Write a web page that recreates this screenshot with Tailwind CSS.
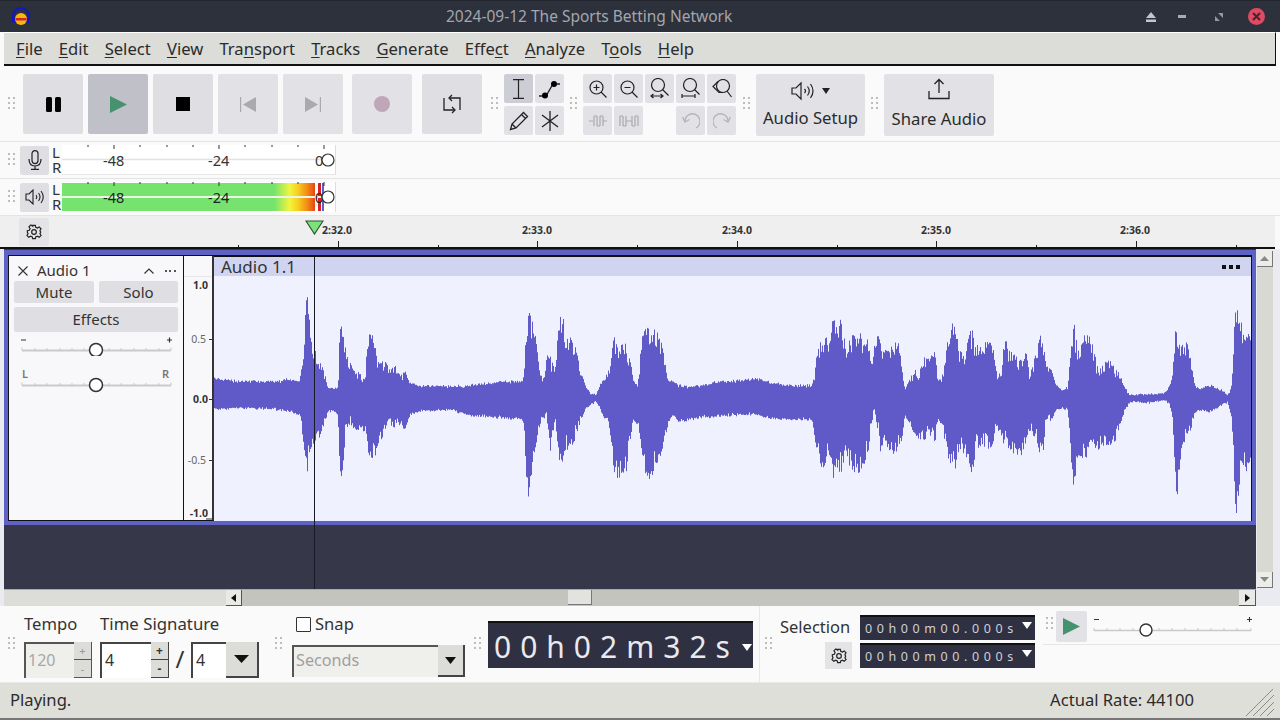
<!DOCTYPE html>
<html lang="en">
<head>
<meta charset="UTF-8">
<title>Audacity</title>
<script src="https://cdn.jsdelivr.net/npm/@tailwindcss/browser@4"></script>
</head>
<body class="w-[1280px] h-[720px] overflow-hidden flex flex-col bg-[#fafafa] font-['Noto_Sans',sans-serif] text-[#2b2b2b]">

<!-- Title bar -->
<div class="h-[32px] shrink-0 flex items-center bg-[#2d313c] border-t border-[#22252d]">
  <svg class="ml-[11px] w-[20px] h-[20px]" viewBox="0 0 20 20">
    <path d="M2 13 V9 a8 8 0 0 1 16 0 V13" fill="none" stroke="#1414c8" stroke-width="2"/>
    <ellipse cx="3" cy="13" rx="2" ry="3" fill="#1414c8"/><ellipse cx="17" cy="13" rx="2" ry="3" fill="#1414c8"/>
    <circle cx="10" cy="12" r="6" fill="#f4b90f"/><path d="M4.5 11 h11 v2.5 h-11z" fill="#d8232a"/>
  </svg>
  <div class="ml-[415px] text-[15.5px] text-[#a3a6ac]">2024-09-12 The Sports Betting Network</div>
  <div class="ml-auto flex items-center">
    <svg class="w-[12px] h-[10px]" viewBox="0 0 12 10"><path d="M6 0 L11 6 H1z M1 7.5 h10 V10 H1z" fill="#c3c6cb"/></svg>
    <svg class="ml-[21px] w-[8px] h-[3px]" viewBox="0 0 8 3"><path d="M0 0 h8 v3 H0z" fill="#a9acb2"/></svg>
    <svg class="ml-[29px] w-[8px] h-[8px]" viewBox="0 0 8 8"><path d="M3 0 h5 v5z M0 3 l5 5 H0z" fill="#94979d"/></svg>
    <div class="ml-[25px] mr-[15px] w-[17px] h-[17px] rounded-full bg-[#df4a64] flex items-center justify-center">
      <svg class="w-[9px] h-[9px]" viewBox="0 0 9 9"><path d="M1 1 L8 8 M8 1 L1 8" stroke="#3a2a30" stroke-width="2"/></svg>
    </div>
  </div>
</div>

<!-- Menu bar -->
<div class="h-[34px] w-[1272px] shrink-0 ml-[4px] flex items-center gap-[16.2px] pl-[12px] pt-[2px] bg-[#dcdcd8] border-t border-white border-b-2 border-b-[#111] border-r border-r-[#111] text-[16.6px] decoration-[#777] underline-offset-2">
  <span><u>F</u>ile</span><span><u>E</u>dit</span><span><u>S</u>elect</span><span><u>V</u>iew</span><span>Tra<u>n</u>sport</span><span><u>T</u>racks</span><span><u>G</u>enerate</span><span>Effe<u>c</u>t</span><span><u>A</u>nalyze</span><span>T<u>o</u>ols</span><span><u>H</u>elp</span>
</div>

<!-- Main toolbar -->
<div class="h-[76px] shrink-0 flex items-start pt-[8px] pl-[8px] bg-[#fafafa] border-b border-[#e4e4e4]">
  <svg class="mt-[23px] w-[8px] h-[14px] shrink-0" viewBox="0 0 8 14" fill="#bdbdbd"><path d="M0 0h2v2H0zM5 0h2v2H5zM0 5h2v2H0zM5 5h2v2H5zM0 10h2v2H0zM5 10h2v2H5z"/></svg>
  <div class="ml-[7px] flex gap-[5px]">
    <div class="w-[60px] h-[60px] rounded-[2px] bg-[#dfdfe3] flex items-center justify-center">
      <svg class="w-[15px] h-[15px]" viewBox="0 0 15 15"><rect width="6" height="15" rx="1.5"/><rect x="9" width="6" height="15" rx="1.5"/></svg>
    </div>
    <div class="w-[60px] h-[60px] rounded-[2px] bg-[#c0c0c9] flex items-center justify-center">
      <svg class="w-[17px] h-[17px]" viewBox="0 0 17 17"><path d="M0 0 L17 8.5 L0 17z" fill="#46926f"/></svg>
    </div>
    <div class="w-[60px] h-[60px] rounded-[2px] bg-[#dfdfe3] flex items-center justify-center">
      <div class="w-[14px] h-[14px] bg-black"></div>
    </div>
    <div class="w-[60px] h-[60px] rounded-[2px] bg-[#e2e2e6] flex items-center justify-center">
      <svg class="w-[16px] h-[15px]" viewBox="0 0 16 15"><path d="M0 0 h1.2 v15 H0z M16 0 v15 L3 7.5z" fill="#a9a9ae"/></svg>
    </div>
    <div class="w-[60px] h-[60px] rounded-[2px] bg-[#e2e2e6] flex items-center justify-center">
      <svg class="w-[16px] h-[15px]" viewBox="0 0 16 15"><path d="M14.8 0 H16 v15 h-1.2z M0 0 v15 L13 7.5z" fill="#a9a9ae"/></svg>
    </div>
    <div class="ml-[4px] w-[60px] h-[60px] rounded-[2px] bg-[#e2e2e6] flex items-center justify-center">
      <div class="w-[16px] h-[16px] rounded-full bg-[#bfa6b8]"></div>
    </div>
    <div class="ml-[5px] w-[60px] h-[60px] rounded-[2px] bg-[#dfdfe3] flex items-center justify-center">
      <svg class="w-[18px] h-[20px]" viewBox="0 0 18 20" fill="none" stroke="#222" stroke-width="1.3"><path d="M7 4 H17 V16 M11 16 H1 V4"/><path d="M9 1 L6 4 L9 7 M9 13 L12 16 L9 19"/></svg>
    </div>
  </div>
  <svg class="ml-[9px] mt-[23px] w-[8px] h-[14px] shrink-0" viewBox="0 0 8 14" fill="#bdbdbd"><path d="M0 0h2v2H0zM5 0h2v2H5zM0 5h2v2H0zM5 5h2v2H5zM0 10h2v2H0zM5 10h2v2H5z"/></svg>
  <div class="ml-[5px] grid grid-cols-[29px_29px] grid-rows-[29px_29px] gap-x-[2px] gap-y-[3px]">
    <div class="rounded-[2px] bg-[#cdcdd5] flex items-center justify-center">
      <svg class="w-[13px] h-[20px]" viewBox="0 0 13 20" fill="none" stroke="#222" stroke-width="1.2"><path d="M1 .6 H12 M1 19.4 H12 M6.5 .6 V19.4"/></svg>
    </div>
    <div class="rounded-[2px] bg-[#e2e2e6] flex items-center justify-center">
      <svg class="w-[24px] h-[20px]" viewBox="0 0 24 20"><path d="M1 17 H8 L15 5 H22" fill="none" stroke="#222" stroke-width="1.3"/><circle cx="7" cy="16.5" r="3"/><circle cx="16" cy="5" r="3"/></svg>
    </div>
    <div class="rounded-[2px] bg-[#e2e2e6] flex items-center justify-center">
      <svg class="w-[20px] h-[20px]" viewBox="0 0 20 20" fill="none" stroke="#222" stroke-width="1.3"><path d="M1.5 18.5 L3 13 L14.5 1.5 L18.5 5.5 L7 17z M3 13 L7 17 M12.5 3.5 L16.5 7.5"/></svg>
    </div>
    <div class="rounded-[2px] bg-[#e2e2e6] flex items-center justify-center">
      <svg class="w-[20px] h-[20px]" viewBox="0 0 20 20" fill="none" stroke="#222" stroke-width="1.3"><path d="M10 0 V20 M2 4 L18 16 M18 4 L2 16"/></svg>
    </div>
  </div>
  <svg class="ml-[6px] mt-[23px] w-[8px] h-[14px] shrink-0" viewBox="0 0 8 14" fill="#bdbdbd"><path d="M0 0h2v2H0zM5 0h2v2H5zM0 5h2v2H0zM5 5h2v2H5zM0 10h2v2H0zM5 10h2v2H5z"/></svg>
  <div class="ml-[5px] grid grid-cols-[29px_29px_29px_29px_29px] grid-rows-[29px_29px] gap-x-[2px] gap-y-[3px]">
    <div class="rounded-[2px] bg-[#e2e2e6] flex items-center justify-center">
      <svg class="w-[18px] h-[18px]" viewBox="0 0 18 18" fill="none" stroke="#222" stroke-width="1.2"><circle cx="7.5" cy="7.5" r="6.5"/><path d="M12 12 L17.5 17.5 M4.5 7.5 h6 M7.5 4.5 v6"/></svg>
    </div>
    <div class="rounded-[2px] bg-[#e2e2e6] flex items-center justify-center">
      <svg class="w-[18px] h-[18px]" viewBox="0 0 18 18" fill="none" stroke="#222" stroke-width="1.2"><circle cx="7.5" cy="7.5" r="6.5"/><path d="M12 12 L17.5 17.5 M4.5 7.5 h6"/></svg>
    </div>
    <div class="rounded-[2px] bg-[#e2e2e6] flex items-center justify-center">
      <svg class="w-[19px] h-[21px]" viewBox="0 0 19 21" fill="none" stroke="#222" stroke-width="1.2"><circle cx="8" cy="7" r="6.5"/><path d="M12.5 11.5 L18.5 17.5 M1 18 h12 M3.5 16 L1 18 L3.5 20 M10.5 16 L13 18 L10.5 20"/></svg>
    </div>
    <div class="rounded-[2px] bg-[#e2e2e6] flex items-center justify-center">
      <svg class="w-[19px] h-[21px]" viewBox="0 0 19 21" fill="none" stroke="#222" stroke-width="1.2"><circle cx="9" cy="7" r="6.5"/><path d="M13.5 11.5 L18.5 16.5 M1 18 h13 M1 16 v4 M14 16 v4"/></svg>
    </div>
    <div class="rounded-[2px] bg-[#e2e2e6] flex items-center justify-center">
      <svg class="w-[20px] h-[19px]" viewBox="0 0 20 19" fill="none" stroke="#222" stroke-width="1.2"><circle cx="11" cy="7" r="6.5"/><path d="M6 2.5 L1 7.5 L7 13.5 L11 13.5 M15 12 L19.5 18"/></svg>
    </div>
    <div class="rounded-[2px] bg-[#e2e2e6] flex items-center justify-center">
      <svg class="w-[18px] h-[12px]" viewBox="0 0 18 12" fill="none" stroke="#a9a9ae" stroke-width="1.2"><path d="M0 6 H4 M14 6 H18 M5 1 V11 M8 1 V11 M11 1 V11 M14 1 V11 M5 1 H8 M11 1 H14 M8 11 H11"/></svg>
    </div>
    <div class="rounded-[2px] bg-[#e2e2e6] flex items-center justify-center">
      <svg class="w-[20px] h-[12px]" viewBox="0 0 20 12" fill="none" stroke="#a9a9ae" stroke-width="1.2"><path d="M7 6 H13 M1 1 V11 M4 1 V11 M7 1 V11 M13 1 V11 M16 1 V11 M19 1 V11 M1 1 H4 M16 1 H19 M4 11 H7 M13 11 H16"/></svg>
    </div>
    <div></div>
    <div class="rounded-[2px] bg-[#e2e2e6] flex items-center justify-center">
      <svg class="w-[18px] h-[17px]" viewBox="0 0 18 17" fill="none" stroke="#b5b5ba" stroke-width="1.4"><path d="M14 16 A7.5 7.5 0 1 0 3 9 M0.5 5 L3 10 L7.5 7.5"/></svg>
    </div>
    <div class="rounded-[2px] bg-[#e2e2e6] flex items-center justify-center">
      <svg class="w-[18px] h-[17px]" viewBox="0 0 18 17" fill="none" stroke="#b5b5ba" stroke-width="1.4"><path d="M4 16 A7.5 7.5 0 1 1 15 9 M17.5 5 L15 10 L10.5 7.5"/></svg>
    </div>
  </div>
  <svg class="ml-[7px] mt-[23px] w-[8px] h-[14px] shrink-0" viewBox="0 0 8 14" fill="#bdbdbd"><path d="M0 0h2v2H0zM5 0h2v2H5zM0 5h2v2H0zM5 5h2v2H5zM0 10h2v2H0zM5 10h2v2H5z"/></svg>
  <div class="ml-[5px] w-[109px] h-[62px] rounded-[2px] bg-[#e2e2e6] flex flex-col items-center pt-[4px]">
    <div class="h-[26px] flex items-center">
      <svg class="w-[24px] h-[20px]" viewBox="0 0 24 20" fill="none" stroke="#222" stroke-width="1.2"><path d="M1 7 H5 L10 2 V18 L5 13 H1z M13.5 8 q2 2 0 4 M16.5 5.5 q3.5 4.5 0 9 M19.5 3 q5 7 0 14"/></svg>
      <svg class="ml-[7px] w-[8px] h-[6px]" viewBox="0 0 8 6"><path d="M0 0 H8 L4 6z" fill="#222"/></svg>
    </div>
    <div class="mt-[2px] text-[16.7px] leading-[24px]">Audio Setup</div>
  </div>
  <svg class="ml-[6px] mt-[23px] w-[8px] h-[14px] shrink-0" viewBox="0 0 8 14" fill="#bdbdbd"><path d="M0 0h2v2H0zM5 0h2v2H5zM0 5h2v2H0zM5 5h2v2H5zM0 10h2v2H0zM5 10h2v2H5z"/></svg>
  <div class="ml-[5px] w-[110px] h-[62px] rounded-[2px] bg-[#e2e2e6] flex flex-col items-center pt-[4px]">
    <svg class="w-[22px] h-[22px]" viewBox="0 0 22 22" fill="none" stroke="#222" stroke-width="1.3"><path d="M11 15 V1.5 M6.5 6 L11 1.5 L15.5 6 M1 13 V20.5 H21 V13"/></svg>
    <div class="mt-[7px] text-[16.7px] leading-[24px]">Share Audio</div>
  </div>
</div>

<!-- Record meter -->
<div class="h-[37px] shrink-0 flex items-center pl-[8px] bg-[#fafafa] border-b border-[#e4e4e4]">
  <svg class="w-[8px] h-[14px] shrink-0" viewBox="0 0 8 14" fill="#bdbdbd"><path d="M0 0h2v2H0zM5 0h2v2H5zM0 5h2v2H0zM5 5h2v2H5zM0 10h2v2H0zM5 10h2v2H5z"/></svg>
  <div class="ml-[4px] w-[29px] h-[29px] rounded-[2px] bg-[#dfdfe3] flex items-center justify-center">
    <svg class="w-[14px] h-[20px]" viewBox="0 0 14 20" fill="none" stroke="#222" stroke-width="1.2"><rect x="4" y=".6" width="6" height="13" rx="3"/><path d="M1 9 q0 7 6 7 q6 0 6-7 M7 16 V19.4 M3 19.4 H11"/></svg>
  </div>
  <div class="ml-[3px] w-[10px] text-[15px] leading-[15px] text-[#333]">L R</div>
  <div class="relative w-[274px] h-[30px] bg-white border-r border-[#ddd]">
    <svg class="absolute left-0 top-0 w-[274px] h-[30px]" viewBox="0 0 274 30" fill="none"><path d="M26 0v2M52 0v4M78 0v2M105 0v2M131 0v2M157 0v4M183 0v2M210 0v2M236 0v2M262 0v4" stroke="#333"/><path d="M0 14.5H264" stroke="#e2e2e2" stroke-width="1.5"/><path d="M0 29.5H274" stroke="#e8e8e8"/></svg>
    <span class="absolute left-[41px] top-[6px] text-[14.5px] leading-[18px] text-[#333]">-48</span>
    <span class="absolute left-[146px] top-[6px] text-[14.5px] leading-[18px] text-[#333]">-24</span>
    <span class="absolute left-[253px] top-[6px] text-[14.5px] leading-[18px] text-[#333]">0</span>
    <svg class="absolute left-[259px] top-[8px] w-[14px] h-[14px]" viewBox="0 0 14 14"><circle cx="7" cy="7" r="6" fill="#fff" stroke="#333" stroke-width="1.2"/></svg>
  </div>
</div>

<!-- Playback meter -->
<div class="h-[37px] shrink-0 flex items-center pl-[8px] bg-[#fafafa] border-b border-[#e4e4e4]">
  <svg class="w-[8px] h-[14px] shrink-0" viewBox="0 0 8 14" fill="#bdbdbd"><path d="M0 0h2v2H0zM5 0h2v2H5zM0 5h2v2H0zM5 5h2v2H5zM0 10h2v2H0zM5 10h2v2H5z"/></svg>
  <div class="ml-[4px] w-[29px] h-[29px] rounded-[2px] bg-[#dfdfe3] flex items-center justify-center">
    <svg class="w-[20px] h-[16px]" viewBox="0 0 20 16" fill="none" stroke="#222" stroke-width="1.1"><path d="M1 5 H4 L8 1 V15 L4 11 H1z M11 6 q1.5 2 0 4 M13.5 4 q3 4 0 8 M16 2 q4.5 6 0 12"/></svg>
  </div>
  <div class="ml-[3px] w-[10px] text-[15px] leading-[15px] text-[#333]">L R</div>
  <div class="relative w-[274px] h-[30px] bg-white border-r border-[#ddd]">
    <div class="absolute left-0 top-[1px] w-[253px] h-[28px] bg-[linear-gradient(90deg,#77e36f_0%,#77e36f_84%,#f1f53c_90%,#f7d21f_93%,#f28a17_97%,#e64612_100%)]"></div>
    <div class="absolute left-[256px] top-[1px] w-[3px] h-[28px] bg-[#d92020]"></div>
    <div class="absolute left-[260px] top-[1px] w-[2px] h-[28px] bg-[#5a5fd0]"></div>
    <svg class="absolute left-0 top-0 w-[274px] h-[30px]" viewBox="0 0 274 30" fill="none"><path d="M26 0v2M52 0v4M78 0v2M105 0v2M131 0v2M157 0v4M183 0v2M210 0v2M236 0v2M262 0v4" stroke="#333"/><path d="M0 15H264" stroke="#eaf5e6" stroke-width="2"/></svg>
    <span class="absolute left-[41px] top-[6px] text-[14.5px] leading-[18px] text-[#222]">-48</span>
    <span class="absolute left-[146px] top-[6px] text-[14.5px] leading-[18px] text-[#222]">-24</span>
    <span class="absolute left-[253px] top-[6px] text-[14.5px] leading-[18px] text-[#222]">0</span>
    <svg class="absolute left-[259px] top-[8px] w-[14px] h-[14px]" viewBox="0 0 14 14"><circle cx="7" cy="7" r="6" fill="#fff" fill-opacity=".85" stroke="#333" stroke-width="1.2"/></svg>
  </div>
</div>

<!-- Timeline ruler -->
<div class="relative w-[1275px] h-[33px] shrink-0 bg-[#efefef] border-b-2 border-[#111]">
  <div class="absolute left-[19px] top-[2px] w-[30px] h-[28px] rounded-[2px] bg-[#e4e4e7] flex items-center justify-center">
    <svg class="w-[16px] h-[16px]" viewBox="0 0 24 24" fill="none" stroke="#222" stroke-width="1.8"><circle cx="12" cy="12" r="3.5"/><path d="M10 2h4l.6 3 2.6 1.1 2.6-1.7 2.8 2.8-1.7 2.6L22 12.4v0l-1.1 2.2 1.7 2.6-2.8 2.8-2.6-1.7L14.6 19.4 14 22h-4l-.6-2.6-2.6-1.1-2.6 1.7-2.8-2.8 1.7-2.6L2 12.4V10l3-.6 1.1-2.6-1.7-2.6 2.8-2.8 2.6 1.7L9.4 2z"/></svg>
  </div>
  <svg class="absolute left-0 top-0 w-[1275px] h-[31px]" viewBox="0 0 1275 31" fill="none" stroke="#222"><path d="M238.5 29v2M338.5 25v6M438.5 29v2M537.5 25v6M637.5 29v2M737.5 25v6M837.5 29v2M936.5 25v6M1036.5 29v2M1136.5 25v6M1236.5 29v2"/></svg>
  <span class="absolute left-[322px] top-[6px] text-[10.5px] leading-[16px] font-bold text-[#333]">2:32.0</span>
  <span class="absolute left-[522px] top-[6px] text-[10.5px] leading-[16px] font-bold text-[#333]">2:33.0</span>
  <span class="absolute left-[722px] top-[6px] text-[10.5px] leading-[16px] font-bold text-[#333]">2:34.0</span>
  <span class="absolute left-[921px] top-[6px] text-[10.5px] leading-[16px] font-bold text-[#333]">2:35.0</span>
  <span class="absolute left-[1120px] top-[6px] text-[10.5px] leading-[16px] font-bold text-[#333]">2:36.0</span>
  <svg class="absolute left-[305px] top-[4px] w-[19px] h-[15px]" viewBox="0 0 19 15"><path d="M1 1 H18 L9.5 14z" fill="#7be37a" stroke="#33523a" stroke-width="1.2"/></svg>
</div>

<!-- Track area with scrollbars -->
<div class="relative h-[357px] shrink-0 flex bg-[#e9ebf0]">
  <div class="ml-[4px] w-[1252px] flex flex-col">
    <div class="h-[340px] pt-[1px] bg-[#363748]">
      <div class="h-[275px] bg-[#5e62c4] px-[4px] pt-[5px] pb-[4px]">
        <div class="h-[266px] flex border border-[#111] bg-[#f8f8fa]">
          <!-- Track panel -->
          <div class="w-[175px] shrink-0 border-r border-[#111] px-[5px]">
            <div class="h-[25px] flex items-center pt-[4px]">
              <svg class="ml-[4px] w-[10px] h-[10px]" viewBox="0 0 10 10"><path d="M.5 .5 L9.5 9.5 M9.5 .5 L.5 9.5" stroke="#333" stroke-width="1.1"/></svg>
              <span class="ml-[9px] text-[15px] text-[#333]">Audio 1</span>
              <svg class="ml-[53px] w-[10px] h-[6px]" viewBox="0 0 10 6"><path d="M.5 5.5 L5 1 L9.5 5.5" fill="none" stroke="#333" stroke-width="1.2"/></svg>
              <span class="ml-[11px] flex gap-[2.5px]"><i class="w-[2px] h-[2px] bg-[#555]"></i><i class="w-[2px] h-[2px] bg-[#555]"></i><i class="w-[2px] h-[2px] bg-[#555]"></i></span>
            </div>
            <div class="flex gap-[5px]">
              <div class="w-[80px] h-[22px] rounded-[2px] bg-[#dfdfe3] text-center text-[15px] leading-[23px] text-[#333]">Mute</div>
              <div class="w-[79px] h-[22px] rounded-[2px] bg-[#dfdfe3] text-center text-[15px] leading-[23px] text-[#333]">Solo</div>
            </div>
            <div class="mt-[4px] w-[164px] h-[25px] rounded-[2px] bg-[#dfdfe3] text-center text-[15px] leading-[25px] text-[#333]">Effects</div>
            <svg class="block w-[164px] h-[24px]" viewBox="0 0 164 24" fill="none"><path d="M7 8h5M153 8h5M155.5 5.5v5" stroke="#333" stroke-width="1.2"/><path d="M8 18.5H157" stroke="#c9c9ce" stroke-width="2"/><path d="M8 15.5v3M21 16v3M33 16v3M46 16v3M58 16v3M70 16v3M95 16v3M107 16v3M120 16v3M132 16v3M145 16v3M157 15.5v3" stroke="#c9c9ce"/><circle cx="82" cy="18" r="6.5" fill="#fff" stroke="#333" stroke-width="1.5"/></svg>
            <div class="relative h-[30px] mt-[14px] text-[11px] font-semibold text-[#777]">
              <span class="absolute left-[8px] top-[-2px] leading-[12px]">L</span>
              <span class="absolute left-[148px] top-[-2px] leading-[12px]">R</span>
              <svg class="absolute left-0 top-[7px] w-[164px] h-[24px]" viewBox="0 0 164 24" fill="none"><path d="M8 8.5H157" stroke="#c9c9ce" stroke-width="2"/><path d="M8 5.5v3M21 6v3M33 6v3M46 6v3M58 6v3M70 6v3M95 6v3M107 6v3M120 6v3M132 6v3M145 6v3M157 5.5v3" stroke="#c9c9ce"/><circle cx="82" cy="8" r="6.5" fill="#fff" stroke="#333" stroke-width="1.5"/></svg>
            </div>
          </div>
          <!-- Vertical ruler -->
          <div class="relative w-[30px] shrink-0 border-r-2 border-[#333] text-[10.5px] leading-[12px]">
            <div class="absolute left-0 right-0 top-[20px] h-px bg-[#e6e6ea]"></div>
            <span class="absolute right-[4px] top-[23px] font-bold text-[#333]">1.0</span>
            <span class="absolute right-[6px] top-[77px] text-[#666]">0.5</span>
            <span class="absolute right-[4px] top-[137px] font-bold text-[#333]">0.0</span>
            <span class="absolute right-[6px] top-[198px] text-[#666]">-0.5</span>
            <span class="absolute right-[4px] top-[251px] font-bold text-[#333]">-1.0</span>
            <svg class="absolute right-0 top-0 w-[6px] h-[264px]" viewBox="0 0 6 264" stroke="#333" fill="none"><path d="M3 83.5h3M3 143.5h3M3 204.5h3M0 263h6" /></svg>
          </div>
          <!-- Clip -->
          <div class="flex-1 flex flex-col border-t border-[#111]">
            <div class="h-[19px] shrink-0 flex items-center justify-between pl-[7px] pr-[11px] bg-[#d0d4f1]">
              <span class="text-[17px] leading-[19px] text-[#333]">Audio 1.1</span>
              <span class="flex gap-[3px]"><i class="w-[4px] h-[4px] bg-[#111]"></i><i class="w-[4px] h-[4px] bg-[#111]"></i><i class="w-[4px] h-[4px] bg-[#111]"></i></span>
            </div>
            <div class="flex-1 bg-[#eff1fe]">
              <svg id="wave" class="block w-[1037px] h-[245px]" viewBox="214 276 1037 245"><path id="wave-path" fill="none" stroke="#5f5ac8" stroke-width="1"/></svg>
            </div>
          </div>
        </div>
      </div>
    </div>
    <!-- Horizontal scrollbar -->
    <div class="h-[17px] flex bg-[#dcdcd8] border-t border-[#aaa]">
      <div class="w-[222px] shrink-0"></div>
      <div class="w-[16px] shrink-0 bg-[#e9e9e5] border-r border-b border-[#555] flex items-center justify-center">
        <svg class="w-[5px] h-[8px]" viewBox="0 0 5 8"><path d="M5 0 V8 L0 4z" fill="#111"/></svg>
      </div>
      <div class="flex-1 bg-[#c4c4bf] pl-[326px]">
        <div class="w-[24px] h-[15px] bg-[#e2e2de] border-r border-b border-[#777]"></div>
      </div>
      <div class="w-[17px] shrink-0 bg-[#e9e9e5] border-r border-b border-[#555] flex items-center justify-center">
        <svg class="w-[5px] h-[8px]" viewBox="0 0 5 8"><path d="M0 0 V8 L5 4z" fill="#111"/></svg>
      </div>
    </div>
  </div>
  <!-- Vertical scrollbar -->
  <div class="ml-[1px] mt-[2px] w-[16px] h-[337px] flex flex-col bg-[#d9d9d3]">
    <div class="h-[16px] shrink-0 bg-[#ecece8] border-r border-b border-[#777] flex items-center justify-center">
      <svg class="w-[9px] h-[5px]" viewBox="0 0 9 5"><path d="M0 5 H9 L4.5 0z" fill="#888"/></svg>
    </div>
    <div class="flex-1"></div>
    <div class="h-[16px] shrink-0 bg-[#ecece8] border-r border-b border-[#777] flex items-center justify-center">
      <svg class="w-[9px] h-[5px]" viewBox="0 0 9 5"><path d="M0 0 H9 L4.5 5z" fill="#888"/></svg>
    </div>
  </div>
  <!-- Playhead line, over the track -->
  <div class="absolute left-[314px] top-[8px] w-px h-[332px] bg-[#1a1a24]"></div>
</div>

<!-- Bottom toolbar -->
<div class="h-[76px] shrink-0 flex items-start pl-[8px] bg-[#fafafa]">
  <svg class="mt-[31px] w-[8px] h-[14px] shrink-0" viewBox="0 0 8 14" fill="#bdbdbd"><path d="M0 0h2v2H0zM5 0h2v2H5zM0 5h2v2H0zM5 5h2v2H5zM0 10h2v2H0zM5 10h2v2H5z"/></svg>
  <!-- Tempo -->
  <div class="ml-[8px] w-[76px] shrink-0">
    <div class="h-[36px] pt-[6px] text-[16.6px] leading-[24px] text-[#333]">Tempo</div>
    <div class="flex h-[36px]">
      <div class="w-[50px] border-t-2 border-l-2 border-[#555] bg-[#efefec] pl-[2px] text-[16px] leading-[32px] text-[#a8a8a8]">120</div>
      <div class="w-[18px] flex flex-col border-r border-b border-[#555] text-[11px] text-[#999] text-center leading-[17px]"><div class="h-[18px] bg-[#dcdcd8] border-b border-[#555]">+</div><div class="flex-1 bg-[#dcdcd8]">-</div></div>
    </div>
  </div>
  <!-- Time signature -->
  <div class="w-[168px] shrink-0">
    <div class="h-[36px] pt-[6px] text-[16.8px] leading-[24px] text-[#333]">Time Signature</div>
    <div class="flex h-[36px] items-start">
      <div class="w-[51px] h-[36px] border-t-2 border-l-2 border-[#444] bg-white pl-[3px] text-[16px] leading-[32px] text-[#333]">4</div>
      <div class="w-[18px] h-[36px] flex flex-col border-r border-b border-[#444] text-[12px] font-bold text-[#333] text-center leading-[17px]"><div class="h-[18px] bg-[#dcdcd8] border-b border-[#444]">+</div><div class="flex-1 bg-[#dcdcd8]">-</div></div>
      <div class="w-[22px] text-center text-[24px] leading-[34px] text-[#333]">/</div>
      <div class="w-[35px] h-[36px] border-t-2 border-l-2 border-[#444] bg-white pl-[3px] text-[16px] leading-[32px] text-[#333]">4</div>
      <div class="w-[33px] h-[36px] bg-[#dcdcd8] border-r-2 border-b-2 border-[#444] flex items-center justify-center"><svg class="w-[15px] h-[8px]" viewBox="0 0 15 8"><path d="M0 0 H15 L7.5 8z" fill="#111"/></svg></div>
    </div>
  </div>
  <svg class="ml-[7px] mt-[31px] w-[8px] h-[14px] shrink-0" viewBox="0 0 8 14" fill="#bdbdbd"><path d="M0 0h2v2H0zM5 0h2v2H5zM0 5h2v2H0zM5 5h2v2H5zM0 10h2v2H0zM5 10h2v2H5z"/></svg>
  <!-- Snap -->
  <div class="ml-[9px] w-[173px] shrink-0">
    <div class="h-[39px] pt-[6px] pl-[4px] flex items-start">
      <div class="mt-[5px] w-[15px] h-[15px] border border-[#333] bg-white rounded-[1px]"></div>
      <span class="ml-[4px] text-[16.6px] leading-[24px] text-[#333]">Snap</span>
    </div>
    <div class="flex h-[32px]">
      <div class="w-[146px] border-t-2 border-l-2 border-[#555] bg-[#efefec] pl-[2px] text-[16.2px] leading-[26px] text-[#a0a0a0]">Seconds</div>
      <div class="w-[27px] bg-[#dcdcd8] border-r-2 border-b-2 border-[#444] flex items-center justify-center"><svg class="w-[11px] h-[7px]" viewBox="0 0 11 7"><path d="M0 0 H11 L5.5 7z" fill="#111"/></svg></div>
    </div>
  </div>
  <svg class="ml-[9px] mt-[31px] w-[8px] h-[14px] shrink-0" viewBox="0 0 8 14" fill="#bdbdbd"><path d="M0 0h2v2H0zM5 0h2v2H5zM0 5h2v2H0zM5 5h2v2H5zM0 10h2v2H0zM5 10h2v2H5z"/></svg>
  <!-- Time display -->
  <div class="relative ml-[6px] mt-[15px] w-[265px] h-[47px] shrink-0 bg-[#2f3042] border-t-2 border-[#111] pl-[6px] text-[30px] leading-[47px] tracking-[9px] whitespace-nowrap text-[#e9e9ee]">
    00h02m32s
    <svg class="absolute right-[1px] top-[21px] w-[10px] h-[7px]" viewBox="0 0 10 7"><path d="M0 0 H10 L5 7z" fill="#fff"/></svg>
  </div>
  <div class="ml-[6px] w-px h-[76px] shrink-0 bg-[#e8e8e8]"></div>
  <svg class="ml-[5px] mt-[31px] w-[8px] h-[14px] shrink-0" viewBox="0 0 8 14" fill="#bdbdbd"><path d="M0 0h2v2H0zM5 0h2v2H5zM0 5h2v2H0zM5 5h2v2H5zM0 10h2v2H0zM5 10h2v2H5z"/></svg>
  <!-- Selection -->
  <div class="ml-[7px] w-[80px] shrink-0 flex flex-col">
    <div class="mt-[9px] h-[24px] text-[16.5px] leading-[24px] text-[#333] whitespace-nowrap">Selection</div>
    <div class="mt-[3px] ml-[45px] w-[27px] h-[27px] bg-[#e4e4e7] flex items-center justify-center">
      <svg class="w-[16px] h-[16px]" viewBox="0 0 24 24" fill="none" stroke="#222" stroke-width="1.8"><circle cx="12" cy="12" r="3.5"/><path d="M10 2h4l.6 3 2.6 1.1 2.6-1.7 2.8 2.8-1.7 2.6L22 12.4v0l-1.1 2.2 1.7 2.6-2.8 2.8-2.6-1.7L14.6 19.4 14 22h-4l-.6-2.6-2.6-1.1-2.6 1.7-2.8-2.8 1.7-2.6L2 12.4V10l3-.6 1.1-2.6-1.7-2.6 2.8-2.8 2.6 1.7L9.4 2z"/></svg>
    </div>
  </div>
  <div class="w-[175px] shrink-0 mt-[9px] flex flex-col gap-[3px]">
    <div class="relative h-[25px] bg-[#2f3042] border-t-2 border-[#111] pl-[5px] text-[12.5px] leading-[23px] tracking-[4.6px] whitespace-nowrap text-[#d0d0d6]">00h00m00.000s<svg class="absolute right-[3px] top-[5px] w-[10px] h-[7px]" viewBox="0 0 10 7"><path d="M0 0 H10 L5 7z" fill="#fff"/></svg></div>
    <div class="relative h-[25px] bg-[#2f3042] border-t-2 border-[#111] pl-[5px] text-[12.5px] leading-[23px] tracking-[4.6px] whitespace-nowrap text-[#d0d0d6]">00h00m00.000s<svg class="absolute right-[3px] top-[5px] w-[10px] h-[7px]" viewBox="0 0 10 7"><path d="M0 0 H10 L5 7z" fill="#fff"/></svg></div>
  </div>
  <!-- Play speed -->
  <div class="ml-[8px] pl-[3px] flex-1 h-[39px] flex items-start border-b border-[#e6e6e6]">
    <svg class="mt-[11px] w-[8px] h-[14px] shrink-0" viewBox="0 0 8 14" fill="#bdbdbd"><path d="M0 0h2v2H0zM5 0h2v2H5zM0 5h2v2H0zM5 5h2v2H5zM0 10h2v2H0zM5 10h2v2H5z"/></svg>
    <div class="ml-[2px] mt-[5px] w-[31px] h-[31px] bg-[#e2e2e6] rounded-[2px] flex items-center justify-center">
      <svg class="w-[17px] h-[17px]" viewBox="0 0 17 17"><path d="M0 0 L17 8.5 L0 17z" fill="#46926f"/></svg>
    </div>
    <svg class="ml-[6px] mt-[6px] w-[164px] h-[26px]" viewBox="0 0 164 26" fill="none"><path d="M1 7.5h5M154 7.5h5M156.5 5v5" stroke="#333" stroke-width="1.1"/><path d="M1 18.5H158" stroke="#c9c9ce" stroke-width="1.5"/><path d="M1 16v3M14 16v3M27 16v3M40 16v3M66 16v3M79 16v3M92 16v3M105 16v3M118 16v3M131 16v3M144 16v3M158 16v3" stroke="#c9c9ce"/><circle cx="53" cy="18" r="6" fill="#fff" stroke="#333" stroke-width="1.4"/></svg>
  </div>
</div>

<!-- Status bar -->
<div class="relative h-[38px] shrink-0 flex items-center justify-between bg-[#dfdfda] border-t border-[#e9e9e5] border-b-2 border-b-[#777] pl-[10px] pr-[86px] text-[16.6px] text-[#2b2b2b]">
  <span>Playing.</span>
  <span>Actual Rate: 44100</span>
  <svg class="absolute right-[5px] bottom-[1px] w-[30px] h-[28px]" viewBox="0 0 30 28" fill="none" stroke="#8a8a86"><path d="M1 27 L28 0 M8 27 L29 6 M15 27 L29 13 M22 27 L29 20"/></svg>
</div>

<script>
  // waveform envelope read off the reference: [x, top, bottom] in page pixels
  const env = [[214,378,410],[240,381,408],[280,381,410],[290,378,413],[300,381,415],[304,345,447],[306,300,482],[308,296,470],[311,340,450],[314,348,445],[320,360,437],[324,370,425],[328,388,412],[335,387,411],[338,388,415],[340,325,470],[342,327,480],[346,350,430],[350,362,425],[355,372,430],[360,372,430],[365,378,432],[368,335,453],[372,333,460],[376,350,455],[380,362,445],[385,360,430],[390,370,425],[395,365,428],[400,375,425],[405,370,430],[410,382,415],[420,385,412],[450,386,410],[470,385,416],[500,381,418],[523,381,420],[524,375,425],[527,315,490],[529,312,500],[533,320,460],[537,345,440],[540,375,425],[544,375,418],[547,355,420],[550,355,455],[555,370,420],[560,310,470],[563,310,460],[566,340,450],[570,335,450],[575,345,440],[580,365,425],[585,385,410],[590,393,405],[596,395,402],[600,385,408],[605,378,420],[610,365,430],[613,332,470],[617,345,480],[622,345,475],[626,340,475],[630,355,445],[633,378,420],[638,385,425],[641,345,445],[643,330,470],[646,325,475],[651,325,481],[655,330,465],[660,335,460],[665,360,440],[668,380,425],[673,380,415],[678,385,422],[690,386,420],[700,385,418],[720,381,417],[740,380,415],[750,378,415],[760,378,416],[770,382,418],[790,385,420],[812,385,420],[815,370,440],[818,345,455],[822,340,470],[825,335,465],[828,340,455],[833,312,480],[838,320,470],[842,317,475],[846,345,460],[852,335,470],[858,332,475],[864,335,465],[868,340,455],[872,365,420],[875,340,420],[878,335,430],[880,340,455],[885,350,440],[888,350,450],[893,345,455],[898,340,450],[902,365,440],[905,390,415],[910,378,425],[915,370,435],[920,370,440],[925,355,440],[930,360,435],[935,345,445],[938,380,420],[942,378,425],[948,335,460],[952,321,465],[956,330,470],[960,350,450],[965,355,455],[970,330,470],[972,328,477],[976,345,450],[982,345,445],[988,340,450],[993,345,445],[996,370,425],[1002,375,440],[1004,335,445],[1010,350,450],[1015,355,460],[1020,360,457],[1026,350,450],[1030,375,430],[1038,345,445],[1042,330,465],[1046,365,425],[1052,370,420],[1056,385,410],[1062,390,408],[1068,387,410],[1070,360,440],[1072,340,470],[1074,322,493],[1078,345,455],[1084,335,460],[1090,335,455],[1094,350,450],[1098,368,450],[1105,362,445],[1110,360,445],[1115,365,445],[1120,375,425],[1125,388,410],[1130,395,402],[1150,394,403],[1165,393,400],[1170,385,405],[1173,372,420],[1175,328,480],[1177,328,500],[1182,345,445],[1187,342,440],[1191,360,430],[1195,385,412],[1200,388,410],[1210,385,412],[1222,390,405],[1228,395,402],[1232,385,420],[1235,305,500],[1237,303,518],[1241,320,465],[1245,340,470],[1251,325,475]];
  let seed = 17;
  function rnd() {
    seed = (seed * 16807) % 2147483647;
    return seed / 2147483647;
  }
  let d = '';
  let k = 0;
  for (let x = 214.5; x < 1251; x += 1) {
    while (k < env.length - 2 && env[k + 1][0] < x) k++;
    const a = env[k], b = env[k + 1];
    const t = Math.min(1, (x - a[0]) / (b[0] - a[0]));
    let top = a[1] + (b[1] - a[1]) * t;
    let bot = a[2] + (b[2] - a[2]) * t;
    // loud stretches get jagged teeth, quiet ones just a little fuzz
    const amp = bot - top;
    const teeth = amp > 45 ? amp * 0.15 : amp * 0.06;
    top += Math.pow(rnd(), 2) * teeth + (amp > 45 ? 0 : rnd() * 2 - 1);
    bot -= Math.pow(rnd(), 2) * teeth + (amp > 45 ? 0 : rnd() * 2 - 1);
    d += 'M' + x + ' ' + top.toFixed(1) + 'V' + bot.toFixed(1);
  }
  document.getElementById('wave-path').setAttribute('d', d);
</script>
</body>
</html>
